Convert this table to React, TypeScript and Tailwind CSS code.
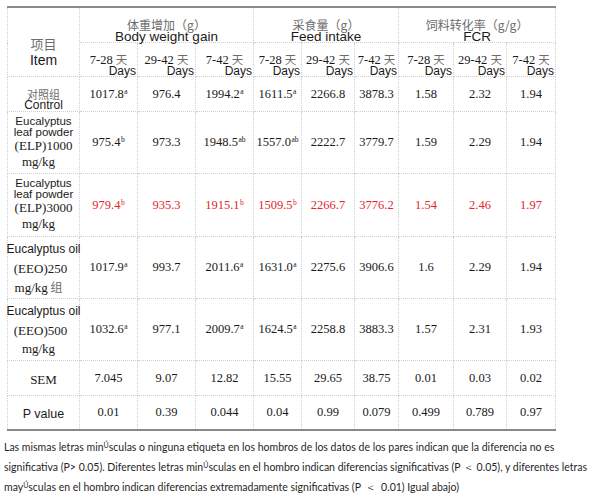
import React from "react";

type Val = { v: string; s?: string };

interface Row {
  key: string;
  label: React.ReactNode;
  vals: Val[];
  red?: boolean;
  h: string;
  labelCls?: string;
}

const serif = "font-['Liberation_Serif','Times_New_Roman','Noto_Sans_CJK_SC',serif]";
const sans = "font-['Liberation_Sans',Arial,'Noto_Sans_CJK_SC',sans-serif]";
const cjk = "font-['Noto_Sans_CJK_SC',sans-serif] text-[#6b6b6b]";

const cell = "border border-dotted border-[#cfcfcf] p-0 text-center align-middle";

const v = (x: string, s?: string): Val => ({ v: x, s });

const EucLeaf = ({ dose }: { dose: string }) => (
  <div className="flex flex-col items-center">
    <span className={`${sans} text-[11.5px] leading-[11px]`}>Eucalyptus</span>
    <span className={`${sans} text-[11.5px] leading-[11px]`}>leaf powder</span>
    <span className={`${serif} text-[13px] leading-[15px]`}>(ELP){dose}</span>
    <span className={`${serif} text-[13px] leading-[17px] -ml-[10px]`}>mg/kg</span>
  </div>
);

const EucOil = ({ dose, zu }: { dose: string; zu?: boolean }) => (
  <div className="flex flex-col items-center">
    <span className={`${sans} text-[12px] leading-[19px] whitespace-nowrap`}>Eucalyptus oil</span>
    <span className={`${serif} text-[13px] leading-[19px] -ml-[6px]`}>(EEO){dose}</span>
    <span className={`${serif} text-[13px] leading-[17px] -ml-[10px]`}>
      mg/kg{zu && <span className={`${cjk} text-[12px]`}> 组</span>}
    </span>
  </div>
);

const rows: Row[] = [
  {
    key: "ctl",
    h: "h-[35px]",
    labelCls: "align-top pt-[11px]",
    label: (
      <div className="flex flex-col items-center">
        <span className={`${cjk} text-[11px] leading-[12px]`}>对照组</span>
        <span className={`${sans} text-[12px] leading-[10px]`}>Control</span>
      </div>
    ),
    vals: [v("1017.8", "a"), v("976.4"), v("1994.2", "a"), v("1611.5", "a"), v("2266.8"), v("3878.3"), v("1.58"), v("2.32"), v("1.94")],
  },
  {
    key: "elp1",
    h: "h-[62px]",
    label: <EucLeaf dose="1000" />,
    vals: [v("975.4", "b"), v("973.3"), v("1948.5", "ab"), v("1557.0", "ab"), v("2222.7"), v("3779.7"), v("1.59"), v("2.29"), v("1.94")],
  },
  {
    key: "elp3",
    h: "h-[63px]",
    red: true,
    label: <EucLeaf dose="3000" />,
    vals: [v("979.4", "b"), v("935.3"), v("1915.1", "b"), v("1509.5", "b"), v("2266.7"), v("3776.2"), v("1.54"), v("2.46"), v("1.97")],
  },
  {
    key: "eeo250",
    h: "h-[62px]",
    label: <EucOil dose="250" zu />,
    vals: [v("1017.9", "a"), v("993.7"), v("2011.6", "a"), v("1631.0", "a"), v("2275.6"), v("3906.6"), v("1.6"), v("2.29"), v("1.94")],
  },
  {
    key: "eeo500",
    h: "h-[62px]",
    label: <EucOil dose="500" />,
    vals: [v("1032.6", "a"), v("977.1"), v("2009.7", "a"), v("1624.5", "a"), v("2258.8"), v("3883.3"), v("1.57"), v("2.31"), v("1.93")],
  },
  {
    key: "sem",
    h: "h-[35px]",
    label: <span className={`${serif} text-[13px]`}>SEM</span>,
    vals: ["7.045", "9.07", "12.82", "15.55", "29.65", "38.75", "0.01", "0.03", "0.02"].map((x) => v(x)),
  },
  {
    key: "p",
    h: "h-[34px]",
    label: <span className={`${sans} text-[12.5px]`}>P value</span>,
    vals: ["0.01", "0.39", "0.044", "0.04", "0.99", "0.079", "0.499", "0.789", "0.97"].map((x) => v(x)),
  },
];

const periods = ["7-28", "29-42", "7-42"];

const groups = [
  { cn: "体重增加（g）", en: "Body weight gain" },
  { cn: "采食量（g）", en: "Feed intake" },
  { cn: "饲料转化率（g/g）", en: "FCR" },
];

const widths = ["w-[72px]", "w-[58px]", "w-[58px]", "w-[58px]", "w-[48px]", "w-[53px]", "w-[44px]", "w-[55px]", "w-[53px]", "w-[49px]"];

const Up = () => <sup className="text-[7px] -top-[3px]">Ú</sup>;

const App: React.FC = () => {
  return (
    <div className="w-[600px] h-[498px] bg-white text-[#1a1a1a] overflow-hidden">
      <div className="pt-[6px] pl-[7px]">
        <table className="table-fixed border-collapse w-[548px] border-t-2 border-b-2 border-t-[#8a8a8a] border-b-[#8a8a8a]">
          <colgroup>
            {widths.map((w, i) => (
              <col key={i} className={w} />
            ))}
          </colgroup>
          <thead>
            <tr>
              <td rowSpan={2} className={`${cell} align-top`}>
                <div className="h-[68px] pt-[28px] flex flex-col items-center">
                  <span className={`${cjk} text-[13px] leading-[16px]`}>项目</span>
                  <span className={`${sans} text-[14px] leading-[17px]`}>Item</span>
                </div>
              </td>
              {groups.map((g) => (
                <td key={g.en} colSpan={3} className={`${cell} align-top`}>
                  <div className="h-[34px] flex flex-col items-center justify-end">
                    <span className={`${cjk} text-[12px] leading-[13px] whitespace-nowrap`}>{g.cn}</span>
                    <span className={`${sans} text-[13.5px] leading-[11px]`}>{g.en}</span>
                  </div>
                </td>
              ))}
            </tr>
            <tr>
              {groups.map((g) =>
                periods.map((p) => (
                  <td key={g.en + p} className={`${cell} align-top`}>
                    <div className="h-[33px] pt-[10px] flex flex-col">
                      <span className={`${serif} text-[12.5px] leading-[12px] whitespace-nowrap`}>
                        {p} <span className={`${cjk} text-[11.5px]`}>天</span>
                      </span>
                      <span className={`${sans} text-[12px] leading-[11px] text-right pr-[1px]`}>Days</span>
                    </div>
                  </td>
                ))
              )}
            </tr>
          </thead>
          <tbody>
            {rows.map((r) => (
              <tr key={r.key} className={r.h}>
                <td className={`${cell} ${r.labelCls ?? ""}`}>{r.label}</td>
                {r.vals.map((x, i) => (
                  <td
                    key={i}
                    className={`${cell} ${serif} text-[12.5px] whitespace-nowrap ${r.red ? "text-[#e3262c]" : ""}`}
                  >
                    {x.v}
                    {x.s && <sup className="text-[7.5px] -top-[4px] ml-[0.5px]">{x.s}</sup>}
                  </td>
                ))}
              </tr>
            ))}
          </tbody>
        </table>
      </div>
      <p className="mt-[6px] pl-[4px] font-['Lato','Liberation_Sans',sans-serif] text-[10.5px] leading-[20px] text-[#1f1f1f] whitespace-nowrap">
        Las mismas letras min<Up />sculas o ninguna etiqueta en los hombros de los datos de los pares indican que la diferencia no es
        <br />
        significativa (P&gt; 0.05). Diferentes letras min<Up />sculas en el hombro indican diferencias significativas (P ＜ 0.05), y diferentes letras
        <br />
        may<Up />sculas en el hombro indican diferencias extremadamente significativas (P <span className="mx-[2px]">＜</span> 0.01) Igual abajo)
      </p>
    </div>
  );
};

export default App;
